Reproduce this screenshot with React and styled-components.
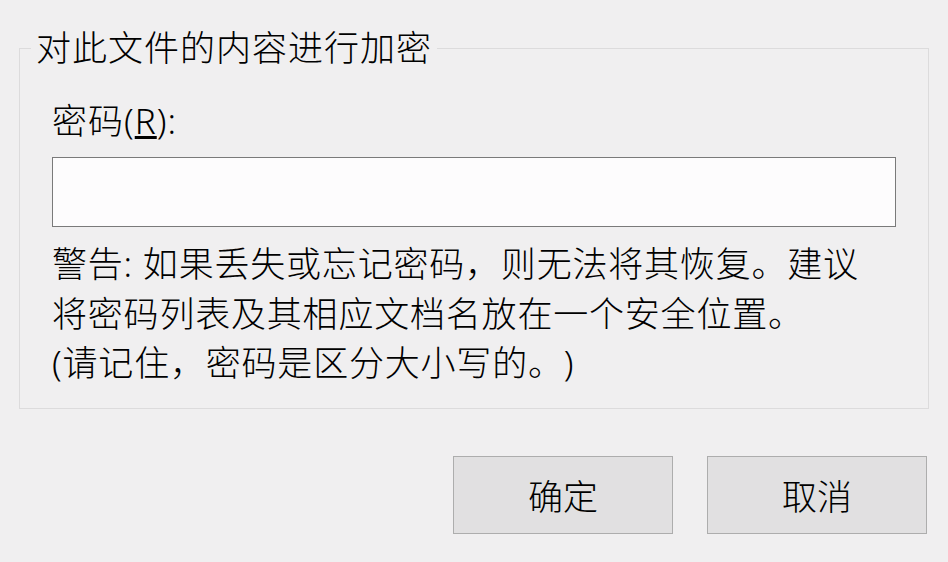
import React from "react";
import styled, { createGlobalStyle } from "styled-components";

const GlobalStyle = createGlobalStyle`
  html, body {
    margin: 0;
    padding: 0;
    background: #f0eff0;
  }
  body {
    font-family: "Noto Sans", "Noto Sans CJK SC", sans-serif;
    font-weight: 300;
    color: #000;
    text-spacing-trim: space-all;
  }
`;

const Dialog = styled.div`
  width: 948px;
  height: 562px;
  padding: 26px 19px 0 19px;
  box-sizing: border-box;
`;

const GroupBox = styled.fieldset`
  margin: 0;
  padding: 0 11px 20px 11px;
  border: 1px solid #dcdbdc;
  border-radius: 0;
`;

const GroupTitle = styled.legend`
  padding: 0 5px;
  font-size: 35px;
  line-height: 44px;
  letter-spacing: 1px;
`;

const GroupBody = styled.div`
  padding: 27px 21px 0 21px;
  display: flex;
  flex-direction: column;
`;

const Label = styled.label`
  font-size: 35px;
  line-height: 48px;
  letter-spacing: 1px;
`;

const PasswordInput = styled.input`
  margin-top: 12px;
  height: 70px;
  box-sizing: border-box;
  border: 1px solid #7a7a7a;
  background: #fdfcfd;
  outline: none;
  padding: 0 8px;
  font-size: 30px;
`;

const Warning = styled.p`
  margin: 12px 0 0 0;
  font-size: 35px;
  line-height: 49.5px;
  letter-spacing: 0.8px;
`;

const ButtonRow = styled.div`
  display: flex;
  justify-content: flex-end;
  gap: 34px;
  margin-top: 47px;
  padding-right: 2px;
`;

const Button = styled.button`
  width: 220px;
  height: 78px;
  box-sizing: border-box;
  border: 1px solid #adadad;
  background: #e1e0e1;
  font-family: "Noto Sans", "Noto Sans CJK SC", sans-serif;
  font-weight: 300;
  font-size: 35px;
  color: #000;
  padding: 0;
  cursor: pointer;
`;

export default function App() {
  return (
    <>
      <GlobalStyle />
      <Dialog>
        <GroupBox>
          <GroupTitle>对此文件的内容进行加密</GroupTitle>
          <GroupBody>
            <Label htmlFor="pwd">
              密码(<u>R</u>):
            </Label>
            <PasswordInput id="pwd" type="password" />
            <Warning>
              警告: 如果丢失或忘记密码，则无法将其恢复。建议
              <br />
              将密码列表及其相应文档名放在一个安全位置。
              <br />
              (请记住，密码是区分大小写的。)
            </Warning>
          </GroupBody>
        </GroupBox>
        <ButtonRow>
          <Button>确定</Button>
          <Button>取消</Button>
        </ButtonRow>
      </Dialog>
    </>
  );
}
